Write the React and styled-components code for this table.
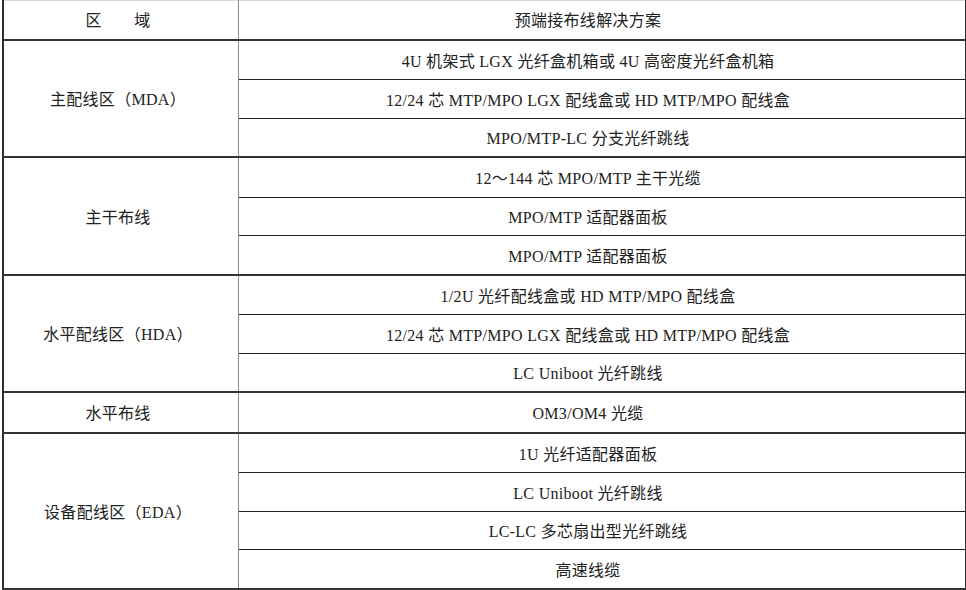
import React from "react";
import styled, { createGlobalStyle } from "styled-components";

const GlobalStyle = createGlobalStyle`
  html, body {
    margin: 0;
    padding: 0;
    background: #ffffff;
  }
  body {
    font-family: "Liberation Serif", "Noto Sans CJK SC", serif;
    color: #222;
  }
`;

// 15 rows + 5 group lines (2px) + bottom border fill the 590px frame
const ROW_H = 38.53;

const Page = styled.div`
  padding-left: 2px;
  width: 964px;
`;

const Table = styled.div`
  box-sizing: border-box;
  width: 964px;
  border-left: 2px solid #2e2e2e;
  border-right: 1.5px solid #333;
  border-bottom: 2px solid #333;
  box-shadow: inset 0 1px 0 #d8d8d8;
`;

const Group = styled.div`
  display: grid;
  grid-template-columns: 235px 1fr;
  grid-template-rows: repeat(${(p) => p.$rows}, ${ROW_H}px);
  border-top: ${(p) => (p.$first ? "none" : "2px solid #333")};
`;

const Zone = styled.div`
  grid-column: 1;
  grid-row: 1 / span ${(p) => p.$rows};
  display: flex;
  align-items: center;
  justify-content: center;
  padding-right: 6px;
  border-right: 1.5px solid #8a8a8a;
  font-size: 16px;
  letter-spacing: 0.3px;
`;

const Item = styled.div`
  grid-column: 2;
  display: flex;
  align-items: center;
  justify-content: center;
  padding-right: 28px;
  border-top: ${(p) => (p.$first ? "none" : "1px solid #222")};
  font-size: 16px;
  letter-spacing: 0.3px;
  white-space: nowrap;
`;

const groups = [
  { zone: "区\u3000\u3000域", items: ["预端接布线解决方案"] },
  {
    zone: "主配线区（MDA）",
    items: [
      "4U 机架式 LGX 光纤盒机箱或 4U 高密度光纤盒机箱",
      "12/24 芯 MTP/MPO LGX 配线盒或 HD MTP/MPO 配线盒",
      "MPO/MTP-LC 分支光纤跳线",
    ],
  },
  {
    zone: "主干布线",
    items: ["12～144 芯 MPO/MTP 主干光缆", "MPO/MTP 适配器面板", "MPO/MTP 适配器面板"],
  },
  {
    zone: "水平配线区（HDA）",
    items: [
      "1/2U 光纤配线盒或 HD MTP/MPO 配线盒",
      "12/24 芯 MTP/MPO LGX 配线盒或 HD MTP/MPO 配线盒",
      "LC Uniboot 光纤跳线",
    ],
  },
  { zone: "水平布线", items: ["OM3/OM4 光缆"] },
  {
    zone: "设备配线区（EDA）",
    items: ["1U 光纤适配器面板", "LC Uniboot 光纤跳线", "LC-LC 多芯扇出型光纤跳线", "高速线缆"],
  },
];

const App = () => {
  return (
    <Page>
      <GlobalStyle />
      <Table>
        {groups.map((g, gi) => (
          <Group key={gi} $rows={g.items.length} $first={gi === 0}>
            <Zone $rows={g.items.length}>{g.zone}</Zone>
            {g.items.map((it, i) => (
              <Item key={i} $first={i === 0}>
                {it}
              </Item>
            ))}
          </Group>
        ))}
      </Table>
    </Page>
  );
};

export default App;
